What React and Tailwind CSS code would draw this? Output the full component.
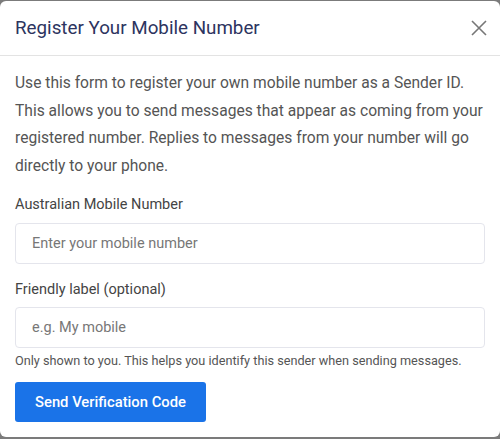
import React from 'react';

const App = () => {
  return (
    <div className="h-[439px] w-[500px] bg-[#7b7b7b] pt-px pb-[2px]" style={{ fontFamily: 'Roboto, "Noto Sans", sans-serif' }}>
      <div className="flex h-full flex-col overflow-hidden rounded-md bg-white">
        {/* Header */}
        <div className="flex h-[55px] shrink-0 items-center justify-between border-b border-[#e3e3e3] pl-[15px] pr-[12px]">
          <h2 className="text-[18.8px] text-[#2d3460]">Register Your Mobile Number</h2>
          <button className="text-[#777]">
            <svg width="18" height="18" viewBox="0 0 18 18" fill="none" stroke="currentColor" strokeWidth="1.6">
              <path d="M2 2l14 14M16 2L2 16" />
            </svg>
          </button>
        </div>

        {/* Body */}
        <div className="px-[15px] pt-[14px]">
          <p className="text-[15.6px] leading-[27.7px] text-[#555]">
            Use this form to register your own mobile number as a Sender ID. This allows you to send messages that appear as coming from your registered number. Replies to messages from your number will go directly to your phone.
          </p>

          <label className="mt-[13px] block text-[14.5px] text-[#444]">Australian Mobile Number</label>
          <input
            className="mt-[7px] block h-[41px] w-full rounded-[4px] border border-[#e4e5ec] px-4 text-[14.5px] placeholder:text-[#777] outline-none"
            placeholder="Enter your mobile number"
          />

          <label className="mt-[15px] block text-[14.5px] text-[#444]">Friendly label (optional)</label>
          <input
            className="mt-[7px] block h-[41px] w-full rounded-[4px] border border-[#e4e5ec] px-4 text-[14.5px] placeholder:text-[#777] outline-none"
            placeholder="e.g. My mobile"
          />
          <p className="mt-[3px] text-[12.7px] text-[#555]">Only shown to you. This helps you identify this sender when sending messages.</p>

          <button className="mt-[12px] h-[40px] rounded-[3px] bg-[#1a73e8] px-[20px] text-[14.8px] font-medium text-white">
            Send Verification Code
          </button>
        </div>
      </div>
    </div>
  );
};

export default App;
